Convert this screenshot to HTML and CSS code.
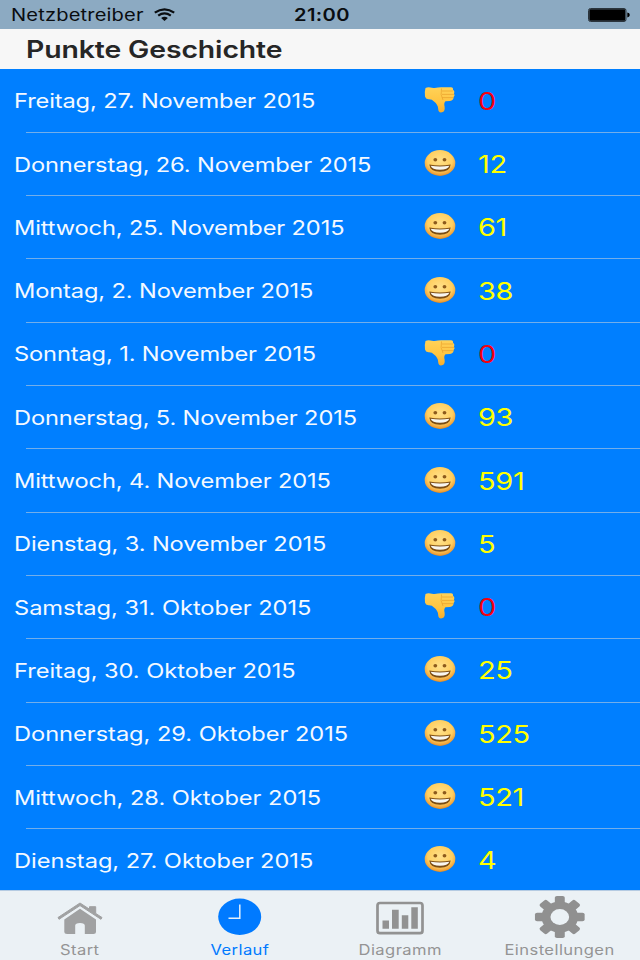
FILE: index.html
```
<!DOCTYPE html>
<html lang="de">
<head>
<meta charset="utf-8">
<title>Punkte Geschichte</title>
<link rel="stylesheet" href="styles.css">
</head>
<body>
<svg class="defs" aria-hidden="true">
  <defs>
    <radialGradient id="face" cx=".5" cy=".4" r=".62"><stop offset="0" stop-color="#ffe08a"/><stop offset=".65" stop-color="#ffcf60"/><stop offset=".88" stop-color="#f0a23a"/><stop offset="1" stop-color="#dc7f14"/></radialGradient>
    <linearGradient id="hand" x1="0" y1="0" x2="0" y2="1"><stop offset="0" stop-color="#ffd258"/><stop offset=".6" stop-color="#ffc440"/><stop offset="1" stop-color="#f6ad2c"/></linearGradient>
    <symbol id="smile" viewBox="0 0 32 28">
      <ellipse cx="16" cy="14" rx="15.3" ry="12.9" fill="url(#face)"/>
      <ellipse cx="11.300" cy="10.700" rx="1.900" ry="1.700" fill="#8c5a1c"/><ellipse cx="20.500" cy="10.700" rx="1.900" ry="1.700" fill="#8c5a1c"/>
      <path d="M5.300 15.500Q16 17.300 26.700 15.500Q26 22.800 16 22.800T5.300 15.500Z" fill="#7c4d14"/>
      <path d="M6.600 16.800Q16 18.300 25.400 16.800Q23.800 20.700 16 20.700T6.600 16.800Z" fill="#f8f6f0"/>
    </symbol>
    <symbol id="down" viewBox="0 0 32 28">
      <path d="M1.500 2Q4 .8 8 1.800Q11 2.400 14 1.600L17 1.200H27Q29.500 1.500 29 4Q31 5 30 7.500Q31.300 9.500 29.600 11Q29.500 14.700 26 14.900L21.500 15.200Q19.600 17 20.600 20.500Q21.300 25.500 18 26.300Q14.300 27 14.200 23Q14 18.500 10 15.500Q8 13 4.500 13.200Q1.500 13 1 10.500Q.5 5 1.500 2Z" fill="url(#hand)"/>
      <path d="M18 5H29M18 8.400H30M18 11.600H29.500M17.500 2.500Q16 9 19 14" fill="none" stroke="#e9a02c" stroke-width=".7"/>
    </symbol>
  </defs>
</svg>
<div class="screen">
  <header class="status">
    <span class="carrier"><span class="wide">Netzbetreiber</span></span>
    <svg class="wifi" viewBox="0 0 21 13"><g fill="none" stroke="#0a0d10" stroke-width="2.300"><path d="M.8 4.600Q10.500-2 20.200 4.600"/><path d="M4.200 7.600Q10.500 3.200 16.800 7.600"/></g><path d="M7.100 9.900Q10.500 7.400 13.900 9.900L10.500 12.900Z" fill="#0a0d10"/></svg>
    <span class="clock"><span class="wide">21:00</span></span>
    <svg class="battery" viewBox="0 0 42 14"><rect x=".5" y=".5" width="37.500" height="13" rx="2" fill="none" stroke="#2b353d"/><rect x="1.300" y="1.300" width="36" height="11.400" rx=".8" fill="#000"/><path d="M39.300 4.600Q41.800 5 41.800 7T39.300 9.400Z" fill="#000"/></svg>
  </header>
  <h1 class="title"><span class="wide">Punkte Geschichte</span></h1>
  <main class="list">
    <div class="row"><span class="date"><span class="wide">Freitag, 27. November 2015</span></span><svg class="emoji"><use href="#down"/></svg><span class="points zero"><span class="wide">0</span></span></div>
    <div class="row"><span class="date"><span class="wide">Donnerstag, 26. November 2015</span></span><svg class="emoji"><use href="#smile"/></svg><span class="points"><span class="wide">12</span></span></div>
    <div class="row"><span class="date"><span class="wide">Mittwoch, 25. November 2015</span></span><svg class="emoji"><use href="#smile"/></svg><span class="points"><span class="wide">61</span></span></div>
    <div class="row"><span class="date"><span class="wide">Montag, 2. November 2015</span></span><svg class="emoji"><use href="#smile"/></svg><span class="points"><span class="wide">38</span></span></div>
    <div class="row"><span class="date"><span class="wide">Sonntag, 1. November 2015</span></span><svg class="emoji"><use href="#down"/></svg><span class="points zero"><span class="wide">0</span></span></div>
    <div class="row"><span class="date"><span class="wide">Donnerstag, 5. November 2015</span></span><svg class="emoji"><use href="#smile"/></svg><span class="points"><span class="wide">93</span></span></div>
    <div class="row"><span class="date"><span class="wide">Mittwoch, 4. November 2015</span></span><svg class="emoji"><use href="#smile"/></svg><span class="points"><span class="wide">591</span></span></div>
    <div class="row"><span class="date"><span class="wide">Dienstag, 3. November 2015</span></span><svg class="emoji"><use href="#smile"/></svg><span class="points"><span class="wide">5</span></span></div>
    <div class="row october"><span class="date"><span class="wide">Samstag, 31. Oktober 2015</span></span><svg class="emoji"><use href="#down"/></svg><span class="points zero"><span class="wide">0</span></span></div>
    <div class="row october"><span class="date"><span class="wide">Freitag, 30. Oktober 2015</span></span><svg class="emoji"><use href="#smile"/></svg><span class="points"><span class="wide">25</span></span></div>
    <div class="row october"><span class="date"><span class="wide">Donnerstag, 29. Oktober 2015</span></span><svg class="emoji"><use href="#smile"/></svg><span class="points"><span class="wide">525</span></span></div>
    <div class="row october"><span class="date"><span class="wide">Mittwoch, 28. Oktober 2015</span></span><svg class="emoji"><use href="#smile"/></svg><span class="points"><span class="wide">521</span></span></div>
    <div class="row october"><span class="date"><span class="wide">Dienstag, 27. Oktober 2015</span></span><svg class="emoji"><use href="#smile"/></svg><span class="points"><span class="wide">4</span></span></div>
  </main>
  <nav class="tabs">
    <a class="tab"><svg class="icon" viewBox="0 0 60 50"><g fill="#a0a1a2"><path d="M8 25.500L30 11L39.500 17.200V14.700H45.700V21.400L52 25.500L51 27.300L30 13.600L9 27.300Z" stroke="#a0a1a2" stroke-width="1" stroke-linejoin="round"/><path d="M30 16.800L46 27.500V40Q46 42 43.500 42H34.800V33.500Q34.800 31 30 31T25.200 33.500V42H17Q14.300 42 14.300 40V27.500Z"/></g></svg><span class="label"><span class="wide">Start</span></span></a>
    <a class="tab active"><svg class="icon" viewBox="0 0 60 50"><ellipse cx="29.700" cy="24.800" rx="21.500" ry="18.200" fill="#007aff"/><path d="M29.800 12.500V26.200H18.500" fill="none" stroke="#e4f0fb" stroke-width="1.500"/></svg><span class="label"><span class="wide">Verlauf</span></span></a>
    <a class="tab"><svg class="icon" viewBox="0 0 60 50"><rect x="7.500" y="11" width="45" height="30.200" rx="2.500" fill="none" stroke="#929292" stroke-width="2.700"/><path d="M12.500 28.500H19V36.800H12.500ZM22 17.700H28.700V36.800H22ZM31.800 23.300H38.300V36.800H31.800ZM41.300 15.300H47.800V36.800H41.300Z" fill="#929292"/></svg><span class="label"><span class="wide">Diagramm</span></span></a>
    <a class="tab"><svg class="icon" viewBox="0 0 60 50"><g transform="translate(29.800 25) scale(1.183 1)"><g fill="#909090"><circle r="15.500"/><g id="teeth"><rect x="-4.200" y="-21" width="8.400" height="42" rx="1.800"/><rect x="-21" y="-4.200" width="42" height="8.400" rx="1.800"/></g><use href="#teeth" transform="rotate(45)"/></g><circle r="7.900" fill="#ebf1f5"/></g></svg><span class="label"><span class="wide">Einstellungen</span></span></a>
  </nav>
</div>
</body>
</html>
```
FILE: styles.css
```
* { box-sizing: border-box; }
body { margin: 0; font-family: Inter, "Liberation Sans", sans-serif; }
.defs { position: absolute; width: 0; height: 0; }
.screen { width: 640px; height: 960px; overflow: hidden; display: flex; flex-direction: column; background: #007fff; }
.wide { display: inline-block; white-space: nowrap; transform: scaleX(1.183); transform-origin: left center; }
.status { flex: none; height: 29px; display: grid; grid-template-columns: 154px 140px 294px 42px; align-items: center; background: #8caac2; color: #0a0d10; font-size: 17px; }
.carrier { padding-left: 11px; letter-spacing: 0.13px; }
.wifi { width: 21px; height: 13px; }
.clock { font-weight: 600; letter-spacing: 0.3px; }
.battery { width: 42px; height: 14px; }
.title { flex: none; height: 40px; margin: 0; padding: 1px 0 0 26px; background: #f7f7f7; color: #262626; font-size: 24px; font-weight: 600; line-height: 40px; letter-spacing: -0.1px; }
.list { flex: none; height: 820.500px; padding-top: .6px; overflow: hidden; color: #f4f9ff; }
.row { height: 63.300px; display: grid; grid-template-columns: 424px 54px 1fr; align-items: center; background: linear-gradient(#73aeea, #73aeea) 26px 100% / 100% 1px no-repeat; }
.date { padding-left: 14px; font-size: 20px; letter-spacing: -0.12px; }
.october .date { letter-spacing: -0.04px; }
.emoji { width: 32px; height: 28px; margin-top: -3px; }
.points { font-size: 24.500px; color: #ff0; letter-spacing: -0.3px; margin-top: -1px; }
.zero { color: #f5000f; }
.tabs { flex: 1; display: grid; grid-template-columns: repeat(4, 160px); background: #ebf1f5; border-top: 1px solid #b5cbe2; }
.tab { display: flex; flex-direction: column; align-items: center; color: #949494; font-size: 14px; letter-spacing: 0.36px; }
.icon { width: 60px; height: 50px; margin-top: 1px; flex: none; }
.label { line-height: 15px; }
.label .wide { transform-origin: center; }
.active { color: #007aff; }
```
